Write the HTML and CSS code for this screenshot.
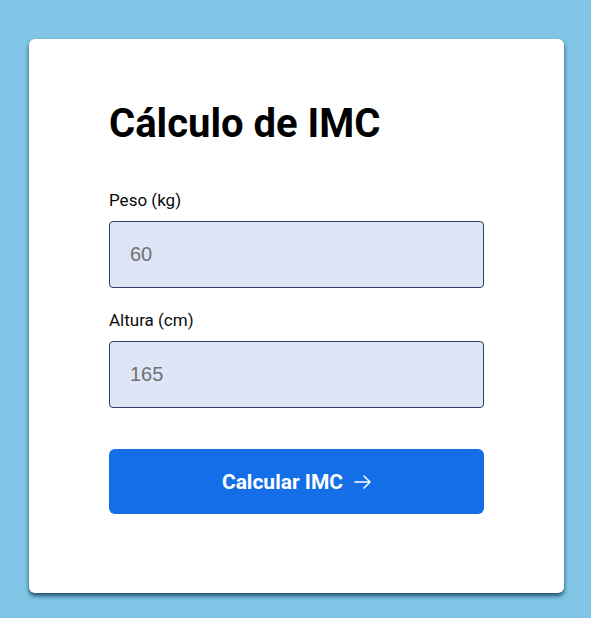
FILE: index.html
```html
<!DOCTYPE html>
<html lang="pt">
<head>
<meta charset="utf-8">
<title>Cálculo de IMC</title>
<link rel="stylesheet" href="styles.css">
</head>
<body>
<main class="card">
  <h1 class="title">Cálculo de IMC</h1>
  <form class="form">
    <label class="field">
      <span class="label">Peso (kg)</span>
      <input class="input" type="text" placeholder="60">
    </label>
    <label class="field">
      <span class="label">Altura (cm)</span>
      <input class="input" type="text" placeholder="165">
    </label>
    <button class="button" type="button">
      <span>Calcular IMC</span>
      <svg class="arrow" width="17" height="14" viewBox="0 0 17 14" fill="none" stroke="currentColor" stroke-width="1.5" stroke-linecap="round" stroke-linejoin="round"><path d="M1 7h15M10 1l6 6-6 6"/></svg>
    </button>
  </form>
</main>
</body>
</html>
```

FILE: styles.css
```css
* { box-sizing: border-box; }
html, body { margin: 0; padding: 0; }
body {
  background: #80c5e5;
  font-family: Roboto, "Liberation Sans", sans-serif;
  padding: 39px 0 0 29px;
  height: 618px;
  overflow: hidden;
}
.card {
  width: 535px;
  height: 554px;
  background: #fff;
  border-radius: 6px;
  box-shadow: 0 3px 4px rgba(0, 40, 70, 0.75);
  padding: 61px 80px 0 80px;
}
.title {
  margin: 0;
  font-size: 40px;
  line-height: 48px;
  font-weight: 700;
  color: #000;
}
.form {
  margin-top: 42px;
  display: flex;
  flex-direction: column;
}
.field {
  display: flex;
  flex-direction: column;
  margin-bottom: 22px;
}
.label {
  font-size: 17px;
  line-height: 20px;
  color: #0a0a0a;
  margin-bottom: 11px;
}
.input {
  height: 67px;
  border: 1px solid #2c3d66;
  border-radius: 4px;
  background: #dde5f7;
  padding: 0 20px;
  font-family: "Liberation Sans", Arial, sans-serif;
  font-size: 20px;
  color: #333;
  outline: none;
}
.input::placeholder { color: #717171; }
.button {
  margin-top: 19px;
  height: 65px;
  border: none;
  border-radius: 6px;
  background: #146ee8;
  color: #fff;
  font-family: Roboto, "Liberation Sans", sans-serif;
  font-size: 21px;
  font-weight: 700;
  display: flex;
  align-items: center;
  justify-content: center;
  gap: 11px;
}
.arrow { display: block; }
```
